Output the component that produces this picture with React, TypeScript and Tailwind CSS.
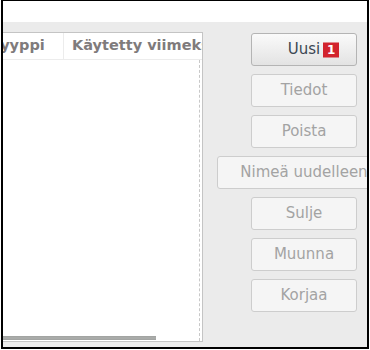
const buttons = ['Tiedot', 'Poista', 'Nimeä uudelleen', 'Sulje', 'Muunna', 'Korjaa']

export default function App() {
  return (
    <div className="w-[370px] h-[350px] bg-white overflow-hidden" style={{ fontFamily: '"DejaVu Sans", sans-serif' }}>
      <div className="ml-px w-[368px] h-[349px] border-t border-l-2 border-r-2 border-b-2 border-black flex flex-col overflow-hidden">
        {/* top strip */}
        <div className="h-[21px] shrink-0 bg-white" />

        {/* main area */}
        <div className="flex-1 bg-[#ebebeb] flex pt-[10px] overflow-hidden">
          {/* list panel */}
          <div className="-ml-[68px] w-[268px] h-[310px] shrink-0 bg-white border border-[#c4c4c4] flex flex-col relative overflow-hidden">
            <div className="flex h-[27px] shrink-0 border-b border-[#ececec] text-[14.5px] font-bold text-[#7f7b7c]">
              <div className="w-[128px] shrink-0 border-r border-[#ececec] pl-[56px] flex items-center">Tyyppi</div>
              <div className="flex-1 pl-[8px] flex items-center whitespace-nowrap overflow-hidden">Käytetty viimeksi</div>
            </div>
            <div className="flex-1 relative">
              <div className="absolute right-[2px] top-0 bottom-0 border-r border-dashed border-[#c8c8c8]" />
              <div className="absolute left-0 bottom-[1px] w-[220px] h-[4px] bg-[#a9aba9] border-y border-[#a2a4a2]" />
            </div>
          </div>

          {/* button column */}
          <div className="ml-[48px] w-[106px] shrink-0 flex flex-col items-center gap-2 pt-px">
            <button className="w-[106px] h-[33px] shrink-0 rounded-[3px] border border-[#b4b4b4] bg-gradient-to-b from-[#fafafa] to-[#e3e3e3] text-[15px] text-[#3b4753] flex items-center justify-center">
              <span className="relative">
                Uusi
                <span className="absolute left-full ml-[3px] top-1/2 -translate-y-1/2 w-[16px] h-[15px] bg-[#d2232d] text-white text-[12px] font-bold leading-[15px] text-center">1</span>
              </span>
            </button>
            {buttons.map((b) => (
              <button
                key={b}
                className={
                  b === 'Nimeä uudelleen'
                    ? 'w-[174px] h-[33px] shrink-0 rounded-[3px] border border-[#cdcdcd] bg-[#f5f5f5] text-[15px] text-[#a3a3a3] whitespace-nowrap flex items-center justify-center'
                    : 'w-[106px] h-[33px] shrink-0 rounded-[3px] border border-[#cdcdcd] bg-[#f5f5f5] text-[15px] text-[#a3a3a3] flex items-center justify-center'
                }
              >
                {b}
              </button>
            ))}
          </div>
        </div>
      </div>
    </div>
  )
}
